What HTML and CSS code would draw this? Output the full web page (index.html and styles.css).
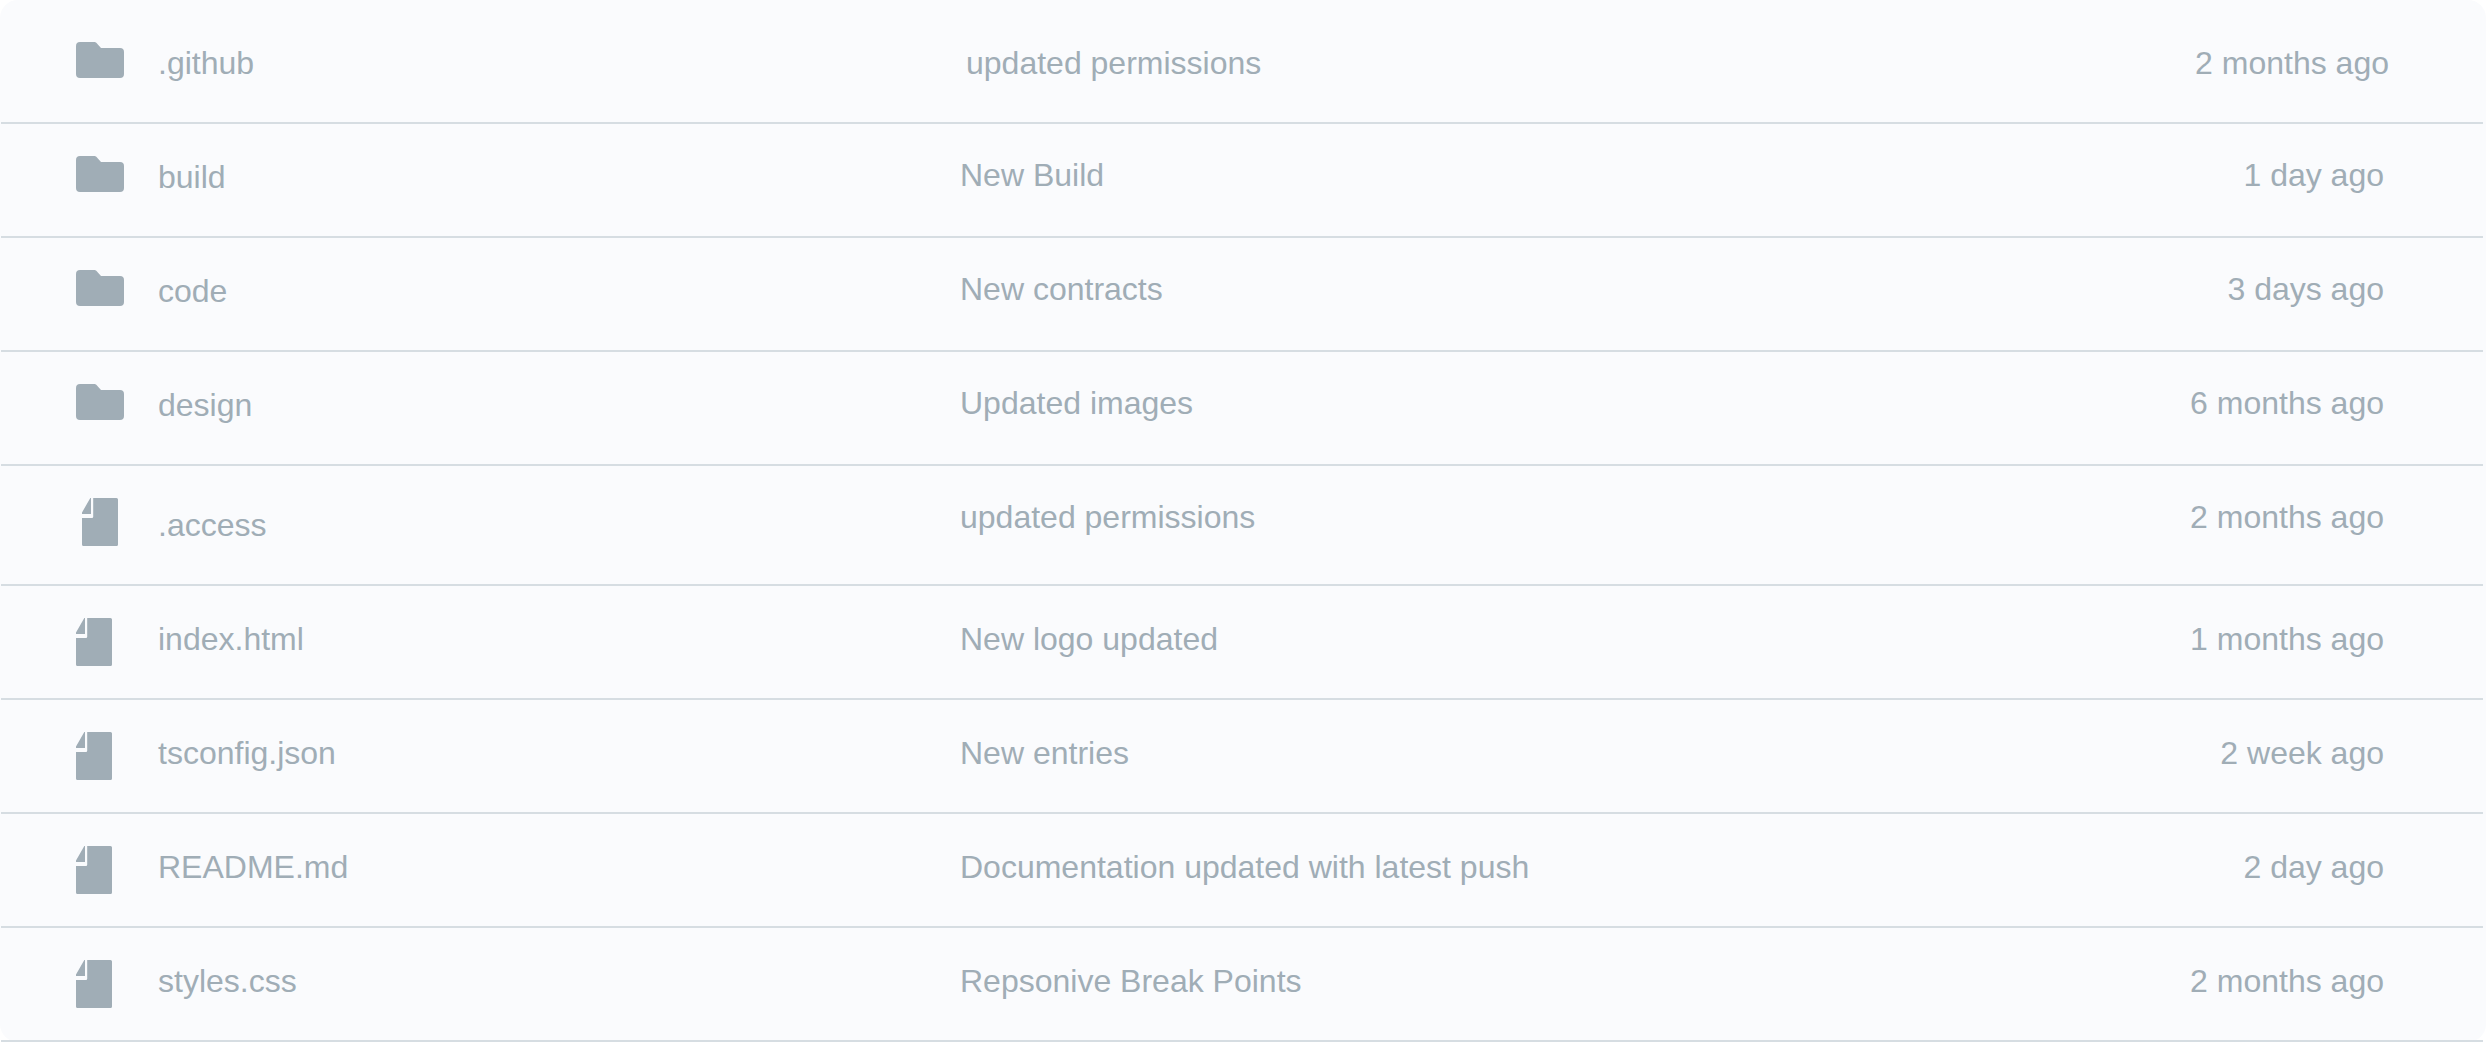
FILE: index.html
```html
<!DOCTYPE html>
<html lang="en">
<head>
<meta charset="utf-8">
<title>Repository files</title>
<link rel="stylesheet" href="styles.css">
</head>
<body>
<svg class="sprite" aria-hidden="true">
  <symbol id="folder" viewBox="0 0 48 36"><path d="M4 0H18.500Q19.500 0 20.300 0.700L25 6H44a4 4 0 0 1 4 4V32a4 4 0 0 1-4 4H4a4 4 0 0 1-4-4V4a4 4 0 0 1 4-4z"/></symbol>
  <symbol id="file" viewBox="0 0 36 48"><path d="M8.300 0H9V16H0V14.500zM11.200 0H34.500a1.500 1.500 0 0 1 1.500 1.500V46.500a1.500 1.500 0 0 1-1.500 1.500H1.500a1.500 1.500 0 0 1-1.500-1.500V20H10a1.200 1.200 0 0 0 1.200-1.200z"/></symbol>
</svg>
<main class="card">
  <table class="files">
    <tbody>
      <tr class="first"><td class="name"><span class="entry"><svg class="icon folder"><use href="#folder"/></svg>.github</span></td><td class="message">updated permissions</td><td class="age">2 months ago</td></tr>
      <tr><td class="name"><span class="entry"><svg class="icon folder"><use href="#folder"/></svg>build</span></td><td class="message">New Build</td><td class="age">1 day ago</td></tr>
      <tr><td class="name"><span class="entry"><svg class="icon folder"><use href="#folder"/></svg>code</span></td><td class="message">New contracts</td><td class="age">3 days ago</td></tr>
      <tr><td class="name"><span class="entry"><svg class="icon folder"><use href="#folder"/></svg>design</span></td><td class="message">Updated images</td><td class="age">6 months ago</td></tr>
      <tr class="access"><td class="name"><span class="entry"><svg class="icon file"><use href="#file"/></svg>.access</span></td><td class="message">updated permissions</td><td class="age">2 months ago</td></tr>
      <tr class="document"><td class="name"><span class="entry"><svg class="icon file"><use href="#file"/></svg>index.html</span></td><td class="message">New logo updated</td><td class="age">1 months ago</td></tr>
      <tr class="document"><td class="name"><span class="entry"><svg class="icon file"><use href="#file"/></svg>tsconfig.json</span></td><td class="message">New entries</td><td class="age">2 week ago</td></tr>
      <tr class="document"><td class="name"><span class="entry"><svg class="icon file"><use href="#file"/></svg>README.md</span></td><td class="message">Documentation updated with latest push</td><td class="age">2 day ago</td></tr>
      <tr class="document"><td class="name"><span class="entry"><svg class="icon file"><use href="#file"/></svg>styles.css</span></td><td class="message">Repsonive Break Points</td><td class="age">2 months ago</td></tr>
    </tbody>
  </table>
</main>
</body>
</html>
```
FILE: styles.css
```css
body {
  margin: 0;
  background: #fff;
  color: #a0adb6;
  font: 32px/36px "Liberation Sans", Arial, sans-serif;
}

.sprite {
  display: none;
}

.card {
  padding: 0 3px 0 1px;
  border-radius: 18px;
  background: #fafbfd;
}

.files {
  width: 100%;
  border-collapse: separate;
  border-spacing: 0;
  table-layout: fixed;
}

.files td {
  box-sizing: border-box;
  height: 114px;
  padding: 32px 0 0;
  border-bottom: 2px solid #d6dde2;
  vertical-align: top;
}

.files .first td {
  height: 124px;
  padding-top: 42px;
}

.files .access td {
  height: 120px;
}

.files .name {
  width: 959px;
  padding-left: 75px;
}

.files .message {
  padding-top: 33px;
}

.files .age {
  width: 398px;
  padding-top: 33px;
  padding-right: 99px;
  text-align: right;
}

.files .first .message,
.files .first .age {
  padding-top: 45px;
}

.files .first .message {
  padding-left: 6px;
}

.files .first .age {
  padding-right: 94px;
}

.files .document .message,
.files .document .age {
  padding-top: 35px;
}

.entry {
  display: flex;
  column-gap: 34px;
  padding-top: 3px;
}

.icon {
  flex: none;
  fill: currentColor;
  margin-top: -3px;
}

.folder {
  width: 48px;
  height: 36px;
}

.file {
  width: 36px;
  height: 48px;
  margin-right: 12px;
}

.access .file {
  margin-left: 6px;
  margin-right: 6px;
}

.access .entry {
  padding-top: 9px;
}

.access .icon {
  margin-top: -9px;
}
```
